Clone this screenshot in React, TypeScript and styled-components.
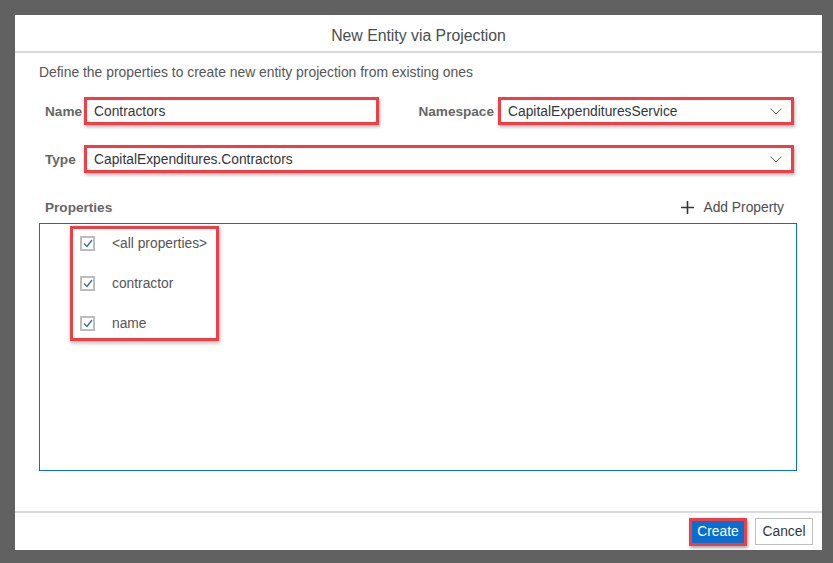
import React from "react";
import styled, { createGlobalStyle } from "styled-components";

const Global = createGlobalStyle`
  html, body { margin: 0; padding: 0; background: #616161; }
  body { font-family: "Liberation Sans", Arial, sans-serif; }
  * { box-sizing: border-box; }
`;

const Page = styled.div`
  width: 833px;
  height: 563px;
  padding: 15px 11px 13px 15px;
  background: #616161;
`;

const Dialog = styled.div`
  width: 807px;
  height: 535px;
  background: #fff;
  display: flex;
  flex-direction: column;
`;

const Header = styled.div`
  height: 38px;
  border-bottom: 2px solid #d9d9d9;
  display: flex;
  align-items: center;
  justify-content: center;
  font-size: 15.8px;
  color: #4a4d50;
  padding-top: 5px;
`;

const Content = styled.div`
  flex: 1;
  padding: 10px 25px 0 24px;
  display: flex;
  flex-direction: column;
`;

const Description = styled.div`
  font-size: 13.9px;
  line-height: 18px;
  color: #555;
`;

const FormGrid = styled.div`
  margin-top: 16px;
  padding-left: 6px;
  display: grid;
  grid-template-columns: 39px 295px 119px 296px;
  grid-auto-rows: 28px;
  row-gap: 20px;
  align-items: center;
`;

const Label = styled.div<{ $right?: boolean }>`
  font-size: 13.6px;
  font-weight: bold;
  color: #666;
  text-align: ${(p) => (p.$right ? "right" : "left")};
  padding-right: ${(p) => (p.$right ? "4px" : "0")};
`;

const Field = styled.div<{ $span?: number }>`
  grid-column: ${(p) => (p.$span ? `span ${p.$span}` : "auto")};
  height: 28px;
  border: 3px solid #ef3e46;
  box-shadow: 1px 2px 3px rgba(0, 0, 0, 0.3);
  background: #fff;
  display: flex;
  align-items: center;
  padding: 0 9px 0 7px;
  font-size: 13.8px;
  color: #32363a;
`;

const FieldText = styled.span`
  flex: 1;
`;

const PropsHeader = styled.div`
  margin-top: 23px;
  height: 22px;
  padding-left: 6px;
  padding-right: 13px;
  display: flex;
  align-items: center;
  justify-content: space-between;
`;

const AddButton = styled.div`
  display: flex;
  align-items: center;
  gap: 9px;
  font-size: 13.8px;
  color: #4a4d50;
`;

const ListBox = styled.div`
  margin-top: 5px;
  height: 248px;
  border: 1px solid #0a6ed1;
  padding: 2px 0 0 30px;
`;

const CheckGroup = styled.div`
  display: flex;
  flex-direction: column;
  gap: 12px;
  border: 3px solid #ef3e46;
  box-shadow: 1px 2px 4px rgba(0, 0, 0, 0.3);
  padding: 0 8px 0 7px;
  width: 149px;
  height: 115px;
`;

const CheckRow = styled.div`
  height: 28px;
  flex-shrink: 0;
  display: flex;
  align-items: center;
  gap: 17px;
  font-size: 13.8px;
  color: #555;
`;

const Box = styled.span`
  width: 15px;
  height: 15px;
  border: 2px solid #bdbdbd;
  display: flex;
  align-items: center;
  justify-content: center;
  background: #fff;
`;

const Footer = styled.div`
  height: 39px;
  border-top: 2px solid #d9d9d9;
  display: flex;
  align-items: center;
  justify-content: flex-end;
  gap: 8px;
  padding: 0 9px 0 0;
`;

const Btn = styled.button<{ $primary?: boolean }>`
  height: ${(p) => (p.$primary ? "28px" : "27px")};
  width: 58px;
  font-family: inherit;
  font-size: 13.8px;
  padding: 0;
  cursor: pointer;
  color: ${(p) => (p.$primary ? "#fff" : "#32363a")};
  background: ${(p) => (p.$primary ? "#0a6ed1" : "#fff")};
  border: ${(p) => (p.$primary ? "3px solid #ef3e46" : "1px solid #bfbfbf")};
  box-shadow: ${(p) => (p.$primary ? "1px 2px 3px rgba(0,0,0,0.35)" : "none")};
`;

const Chevron = () => (
  <svg width="12" height="7" viewBox="0 0 12 7">
    <path d="M0.5 0.5 L6 6 L11.5 0.5" fill="none" stroke="#5b6f86" strokeWidth="1" />
  </svg>
);

const Check = () => (
  <svg width="10" height="9" viewBox="0 0 10 9">
    <path d="M1 4.5 L4 7.5 L9 1" fill="none" stroke="#3a6fa8" strokeWidth="1.4" />
  </svg>
);

const Plus = () => (
  <svg width="13" height="13" viewBox="0 0 13 13">
    <path d="M6.5 0 V13 M0 6.5 H13" stroke="#32363a" strokeWidth="1.6" />
  </svg>
);

const items = ["<all properties>", "contractor", "name"];

export default function App() {
  return (
    <>
      <Global />
      <Page>
        <Dialog>
          <Header>New Entity via Projection</Header>
          <Content>
            <Description>
              Define the properties to create new entity projection from existing ones
            </Description>
            <FormGrid>
              <Label>Name</Label>
              <Field>
                <FieldText>Contractors</FieldText>
              </Field>
              <Label $right>Namespace</Label>
              <Field>
                <FieldText>CapitalExpendituresService</FieldText>
                <Chevron />
              </Field>
              <Label>Type</Label>
              <Field $span={3}>
                <FieldText>CapitalExpenditures.Contractors</FieldText>
                <Chevron />
              </Field>
            </FormGrid>
            <PropsHeader>
              <Label>Properties</Label>
              <AddButton>
                <Plus />
                Add Property
              </AddButton>
            </PropsHeader>
            <ListBox>
              <CheckGroup>
                {items.map((t) => (
                  <CheckRow key={t}>
                    <Box>
                      <Check />
                    </Box>
                    {t}
                  </CheckRow>
                ))}
              </CheckGroup>
            </ListBox>
          </Content>
          <Footer>
            <Btn $primary>Create</Btn>
            <Btn>Cancel</Btn>
          </Footer>
        </Dialog>
      </Page>
    </>
  );
}
